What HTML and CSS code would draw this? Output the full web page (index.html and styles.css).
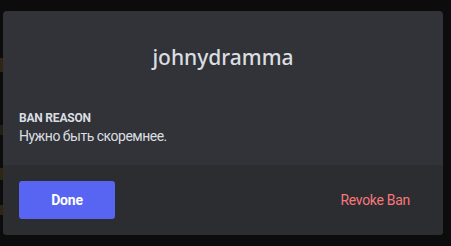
FILE: index.html
```html
<!DOCTYPE html>
<html>
<head>
<meta charset="utf-8">
<link rel="stylesheet" href="styles.css">
</head>
<body>
<div class="backdrop">
  <div class="modal">
    <div class="header">
      <h1 class="title">johnydramma</h1>
    </div>
    <div class="content">
      <div class="label">Ban Reason</div>
      <div class="reason">Нужно быть скоремнее.</div>
    </div>
    <div class="footer">
      <button class="btn-done">Done</button>
      <button class="btn-revoke">Revoke Ban</button>
    </div>
  </div>
</div>
</body>
</html>
```

FILE: styles.css
```css
html, body {
  margin: 0;
  padding: 0;
  width: 451px;
  height: 246px;
  overflow: hidden;
  background: #0c0c0d;
  font-family: Roboto, "Liberation Sans", sans-serif;
}
.backdrop {
  height: 246px;
  padding: 11px 8px 11px 3px;
  box-sizing: border-box;
  background:
    linear-gradient(to bottom,
      #0c0c0d 0, #0c0c0d 58px,
      #2e2512 58px, #2e2512 72px,
      #0c0c0d 72px, #0c0c0d 125px,
      #221e14 125px, #221e14 135px,
      #0c0c0d 135px, #0c0c0d 168px,
      #2e2512 168px, #2e2512 180px,
      #0c0c0d 180px, #0c0c0d 205px,
      #2e2512 205px, #2e2512 215px,
      #0c0c0d 215px) left top / 3px 100% no-repeat,
    #0c0c0d;
}
.modal {
  height: 224px;
  background: #313338;
  border-radius: 4px;
  display: flex;
  flex-direction: column;
  overflow: hidden;
}
.header {
  padding-top: 34px;
  text-align: center;
}
.title {
  margin: 0;
  font-family: "Noto Sans", "Open Sans", sans-serif;
  font-size: 21px;
  line-height: 24px;
  font-weight: 500;
  color: #dbdee1;
}
.content {
  padding: 41px 16px 0;
}
.label {
  font-size: 12px;
  line-height: 16px;
  font-weight: 700;
  letter-spacing: -0.2px;
  text-transform: uppercase;
  color: #dbdee1;
}
.reason {
  font-size: 14px;
  line-height: 20px;
  letter-spacing: -0.5px;
  color: #dbdee1;
}
.footer {
  margin-top: auto;
  height: 70px;
  box-sizing: border-box;
  padding: 16px;
  background: #2b2d31;
  display: flex;
  justify-content: space-between;
  align-items: center;
}
.btn-done {
  width: 96px;
  height: 38px;
  border: none;
  border-radius: 3px;
  background: #5865f2;
  color: #ffffff;
  font-family: inherit;
  font-size: 14px;
  font-weight: 700;
  letter-spacing: -0.2px;
  padding: 0;
}
.btn-revoke {
  height: 38px;
  border: none;
  background: transparent;
  color: #fa777c;
  font-family: inherit;
  font-size: 14px;
  font-weight: 400;
  letter-spacing: -0.3px;
  padding: 0 17px;
}
```
